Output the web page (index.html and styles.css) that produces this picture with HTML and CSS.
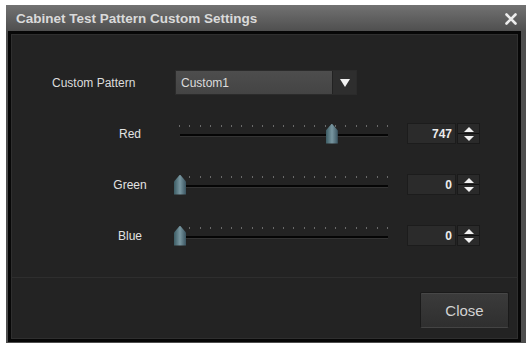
FILE: index.html
```html
<!DOCTYPE html>
<html lang="en">
<head>
  <meta charset="UTF-8" />
  <title>Cabinet Test Pattern Custom Settings</title>
  <link rel="stylesheet" href="styles.css">
</head>
<body>

  <div class="window">
    <div class="titlebar">
      <span class="title">Cabinet Test Pattern Custom Settings</span>
      <svg class="close-x" width="12" height="12" viewBox="0 0 12 12">
        <path d="M1.5 1.5 L10.5 10.5 M10.5 1.5 L1.5 10.5" stroke="#ececec" stroke-width="2.6" stroke-linecap="round"/>
      </svg>
    </div>

    <div class="content">
      <div class="pattern-row">
        <span class="pattern-label">Custom Pattern</span>
        <div class="select">
          <span class="select-value">Custom1</span>
          <span class="select-arrow"></span>
        </div>
      </div>

      <div class="sliders">
        <div class="slider-row">
          <span class="slider-label">Red</span>
          <div class="slider">
            <div class="ticks"></div>
            <div class="track"></div>
            <div class="rail"><div class="thumb" style="left: 73%"></div></div>
          </div>
          <div class="number">747</div>
          <div class="spinner"><span class="up"></span><span class="down"></span></div>
        </div>

        <div class="slider-row">
          <span class="slider-label">Green</span>
          <div class="slider">
            <div class="ticks"></div>
            <div class="track"></div>
            <div class="rail"><div class="thumb" style="left: 0%"></div></div>
          </div>
          <div class="number">0</div>
          <div class="spinner"><span class="up"></span><span class="down"></span></div>
        </div>

        <div class="slider-row">
          <span class="slider-label">Blue</span>
          <div class="slider">
            <div class="ticks"></div>
            <div class="track"></div>
            <div class="rail"><div class="thumb" style="left: 0%"></div></div>
          </div>
          <div class="number">0</div>
          <div class="spinner"><span class="up"></span><span class="down"></span></div>
        </div>
      </div>

      <div class="footer">
        <button class="close-btn">Close</button>
      </div>
    </div>
  </div>

</body>
</html>
```

FILE: styles.css
```css
* {
  box-sizing: border-box;
}
body {
  margin: 0;
  background: #fff;
  font-family: 'Liberation Sans', Arial, sans-serif;
}
.window {
  margin: 5px 0 0 6px;
  width: 520px;
  height: 338px;
  background: #4e4e4e;
  padding: 0 5px 1px 2px;
  display: flex;
  flex-direction: column;
}
.titlebar {
  height: 26px;
  flex: none;
  margin: 0 -5px 0 -2px;
  padding: 0 9px 0 10px;
  background: linear-gradient(#727272, #4f4f4f);
  display: flex;
  align-items: center;
  justify-content: space-between;
}
.title {
  color: #dadada;
  font-size: 13.5px;
  font-weight: bold;
  padding-top: 1px;
}
.close-x {
  margin-top: 1px;
}
.content {
  flex: 1;
  background: #232323;
  border: 3px solid #070707;
  box-shadow: inset 1px 1px 0 #2f2f2f, inset -1px -1px 0 #2f2f2f;
  padding-top: 36px;
  display: flex;
  flex-direction: column;
}
.pattern-row {
  display: flex;
  align-items: center;
  height: 25px;
  padding-left: 41px;
}
.pattern-label {
  width: 123px;
  color: #dcdcdc;
  font-size: 12px;
}
.select {
  width: 182px;
  height: 25px;
  display: flex;
  background: linear-gradient(#4d4d4d, #444);
  border: 1px solid #2b2b2b;
}
.select-value {
  flex: 1;
  color: #dcdcdc;
  font-size: 12px;
  padding: 5px 0 0 5px;
}
.select-arrow {
  width: 24px;
  background: #2e2e2e;
  border-left: 1px solid #222;
  position: relative;
}
.select-arrow::after {
  content: "";
  position: absolute;
  left: 7px;
  top: 8px;
  border-left: 5px solid transparent;
  border-right: 5px solid transparent;
  border-top: 8px solid #f2f2f2;
}
.sliders {
  margin-top: 13px;
  display: flex;
  flex-direction: column;
}
.slider-row {
  height: 51px;
  display: flex;
  align-items: center;
  padding-left: 89px;
}
.slider-label {
  width: 60px;
  text-align: center;
  color: #e2e2e2;
  font-size: 12px;
}
.slider {
  position: relative;
  width: 220px;
  height: 30px;
  margin-left: 14px;
}
.ticks {
  position: absolute;
  left: 5px;
  right: 5px;
  top: 6px;
  height: 2px;
  background: repeating-linear-gradient(90deg, #6a6a6a 0 1px, transparent 1px 10.4px);
}
.track {
  position: absolute;
  left: 6px;
  right: 6px;
  top: 15px;
  height: 3px;
  background: #050505;
  border-bottom: 1px solid #343434;
}
.rail {
  position: absolute;
  left: 0;
  right: 12px;
  top: 5px;
  height: 20px;
}
.thumb {
  position: absolute;
  top: 0;
  width: 12px;
  height: 20px;
  background: linear-gradient(90deg, #3c5c64, #7896a0 50%, #3a5460);
  clip-path: polygon(50% 0, 100% 35%, 100% 100%, 0 100%, 0 35%);
}
.number {
  width: 49px;
  height: 21px;
  margin-left: 13px;
  background: #2b2b2b;
  border: 1px solid #1c1c1c;
  color: #ececec;
  font-size: 12px;
  font-weight: bold;
  text-align: right;
  padding: 3px 3px 0 0;
}
.spinner {
  width: 23px;
  height: 21px;
  margin-left: 1px;
  background: #2a2a2a;
  border: 1px solid #1a1a1a;
  display: flex;
  flex-direction: column;
}
.spinner span {
  flex: 1;
  position: relative;
}
.up {
  border-bottom: 1px solid #111;
}
.up::after,
.down::after {
  content: "";
  position: absolute;
  left: 6px;
  border-left: 5px solid transparent;
  border-right: 5px solid transparent;
}
.up::after {
  top: 3px;
  border-bottom: 5px solid #f0f0f0;
}
.down::after {
  top: 2px;
  border-top: 5px solid #f0f0f0;
}
.footer {
  margin-top: 16px;
  border-top: 1px solid #2e2e2e;
  padding: 14px 9px 0 0;
  display: flex;
  justify-content: flex-end;
}
.close-btn {
  width: 89px;
  height: 36px;
  background: linear-gradient(#3b3b3b, #2f2f2f);
  border: 1px solid #1a1a1a;
  border-bottom-color: #444;
  border-radius: 2px;
  color: #d2d2d2;
  font-family: 'Liberation Sans', Arial, sans-serif;
  font-size: 15px;
  box-shadow: inset 0 1px 0 #474747;
}
```
